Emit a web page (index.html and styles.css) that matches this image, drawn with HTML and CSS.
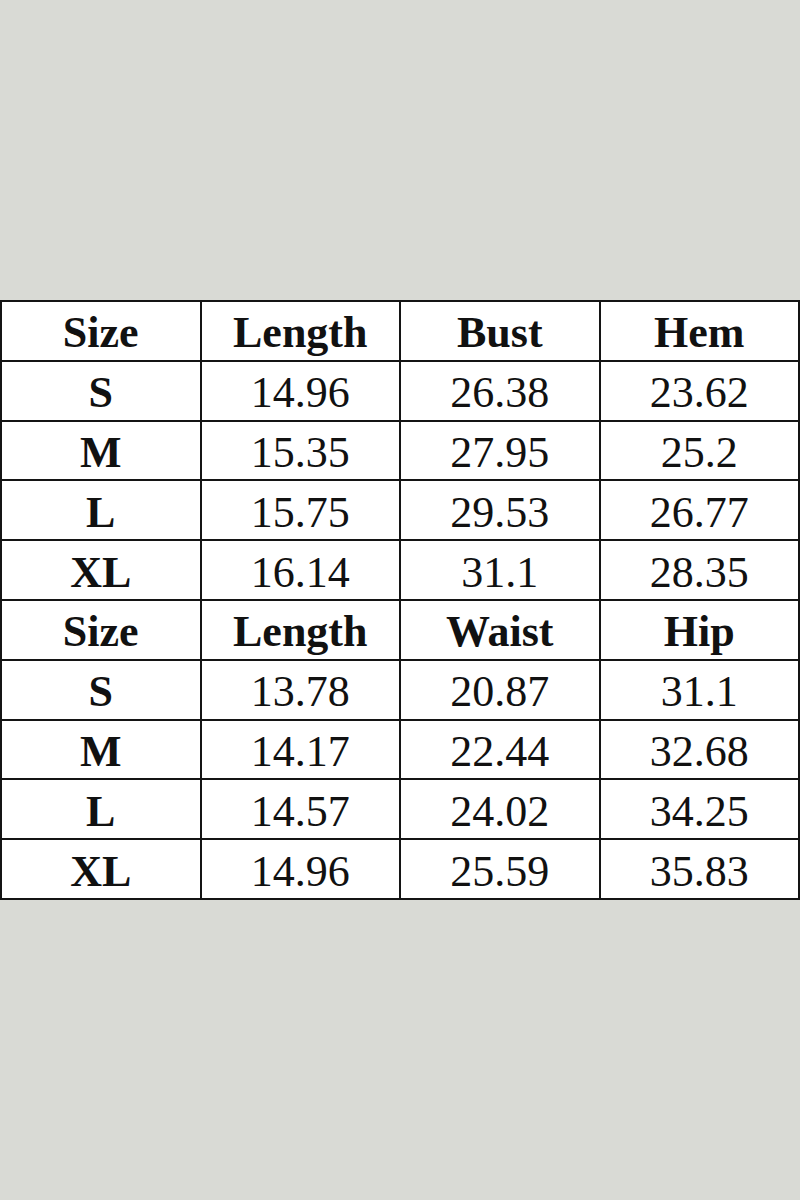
FILE: index.html
```html
<!DOCTYPE html>
<html>
<head>
<meta charset="utf-8">
<link rel="stylesheet" href="styles.css">
</head>
<body>
<div class="chart">
  <div class="cell head">Size</div><div class="cell head">Length</div><div class="cell head">Bust</div><div class="cell head">Hem</div>
  <div class="cell head">S</div><div class="cell">14.96</div><div class="cell">26.38</div><div class="cell">23.62</div>
  <div class="cell head">M</div><div class="cell">15.35</div><div class="cell">27.95</div><div class="cell">25.2</div>
  <div class="cell head">L</div><div class="cell">15.75</div><div class="cell">29.53</div><div class="cell">26.77</div>
  <div class="cell head">XL</div><div class="cell">16.14</div><div class="cell">31.1</div><div class="cell">28.35</div>
  <div class="cell head">Size</div><div class="cell head">Length</div><div class="cell head">Waist</div><div class="cell head">Hip</div>
  <div class="cell head">S</div><div class="cell">13.78</div><div class="cell">20.87</div><div class="cell">31.1</div>
  <div class="cell head">M</div><div class="cell">14.17</div><div class="cell">22.44</div><div class="cell">32.68</div>
  <div class="cell head">L</div><div class="cell">14.57</div><div class="cell">24.02</div><div class="cell">34.25</div>
  <div class="cell head">XL</div><div class="cell">14.96</div><div class="cell">25.59</div><div class="cell">35.83</div>
</div>
</body>
</html>
```
FILE: styles.css
```css
html, body {
  margin: 0;
  padding: 0;
  background: #d9dad5;
}
body {
  padding-top: 300px;
  height: 900px;
}
.chart {
  width: 800px;
  height: 600px;
  box-sizing: border-box;
  padding: 2px;
  gap: 2px;
  background: #141414;
  display: grid;
  grid-template-columns: repeat(4, 1fr);
  grid-template-rows: repeat(10, 1fr);
}
.cell {
  background: #ffffff;
  display: flex;
  align-items: center;
  justify-content: center;
  font-family: "Liberation Serif", "Times New Roman", serif;
  font-size: 44px;
  color: #111;
  line-height: 1;
  padding-top: 5px;
}
.head {
  font-weight: bold;
  font-size: 44px;
}
```
